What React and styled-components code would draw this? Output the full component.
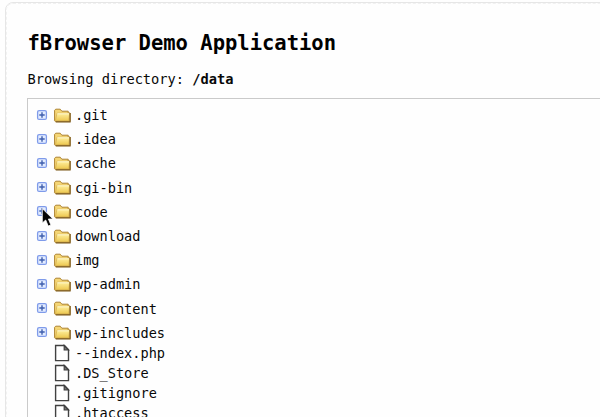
import React from "react";
import styled, { createGlobalStyle } from "styled-components";

const GlobalStyle = createGlobalStyle`
  html, body { margin: 0; height: 417px; overflow: hidden; background: #fefefe; }
  *, *::before, *::after { box-sizing: border-box; }
`;

const Page = styled.div`
  height: 417px;
  overflow: hidden;
  padding: 2px 0 0 5px;
  font-family: "DejaVu Sans Mono", monospace;
  font-size: 13.7px;
  color: #080808;
`;

const Card = styled.main`
  width: 640px;
  height: 460px;
  padding: 27px 0 0 21px;
  border: 1px solid #e6e6e6;
  border-radius: 8px;
  background: #fefefe;
  outline: 1px dashed #f1f1f1;
  outline-offset: -2px;
`;

const Title = styled.h1`
  margin: 0;
  height: 26px;
  padding-left: 0.5px;
  font-size: 20.5px;
  line-height: 26px;
  color: #000;
  white-space: pre;
`;

const Location = styled.p`
  margin: 13px 0 9px;
  height: 20px;
  padding-left: 0.5px;
  line-height: 20px;
  white-space: pre;
`;

const Tree = styled.ul`
  list-style: none;
  margin: 0;
  height: 400px;
  padding: 4px 0 0 9px;
  border: 1px solid #cacaca;
  font-size: 13.6px;
`;

const Row = styled.li`
  position: relative;
  display: grid;
  grid-template-columns: 17px 21px auto;
  align-items: center;
  height: ${(p) => (p.$file ? "20px" : "24.2px")};
  line-height: 20px;
  white-space: pre;
`;

const Files = styled.ul`
  list-style: none;
  margin: -2px 0 0;
  padding: 0;
`;

const Icon = styled.svg`
  display: block;
  overflow: visible;
`;

const ExpanderIcon = styled(Icon)`
  margin: 0 0 1px -0.5px;
`;

const Pointer = styled.svg`
  position: absolute;
  left: 5px;
  top: 8px;
  z-index: 1;
  overflow: visible;
`;

const Expander = () => (
  <ExpanderIcon width="10" height="10" viewBox="0 0 10 10">
    <rect x="0.6" y="0.6" width="8.8" height="8.8" rx="1.5" fill="#e3ecff" stroke="#7f9bea" strokeWidth="1.3" />
    <path d="M2.3 5H7.7M5 2.3V7.7" stroke="#3f5fae" strokeWidth="1.4" />
  </ExpanderIcon>
);

const Folder = () => (
  <Icon width="17" height="15" viewBox="0 0 17 15">
    <defs>
      <linearGradient id="folderFace" x1="0" y1="0" x2="0" y2="1">
        <stop offset="0" stopColor="#fff0a0" />
        <stop offset="1" stopColor="#edc850" />
      </linearGradient>
    </defs>
    <path d="M0.6 12.8V2.3L1.7 1.2H6.2L7.8 3.2H14.2V5H16.1V13.6H1.4Z" fill="#f5d675" stroke="#ad8330" strokeWidth="1" strokeLinejoin="round" />
    <path d="M3 5.2H15.6L14.8 12.8H1.4Z" fill="url(#folderFace)" stroke="#c59a3c" strokeWidth="0.5" />
    <path d="M3.3 5.8H15" stroke="#fffad0" />
    <path d="M16.1 5V13.9H1.8" fill="none" stroke="#806026" strokeWidth="1.2" />
  </Icon>
);

const FileIcon = () => (
  <Icon width="16" height="18" viewBox="0 0 16 18">
    <path d="M1.6 1.5H10.4L14.5 5.8V16.6H1.6Z" fill="#fff" stroke="#414141" strokeWidth="1.4" />
    <path d="M10.2 1.5V6H14.5Z" fill="#777" stroke="#414141" strokeWidth="1.2" />
  </Icon>
);

const Cursor = () => (
  <Pointer width="12" height="19" viewBox="0 0 12 19">
    <path d="M0.3 0.6V15L3.7 12L6.2 18.1L8.9 16.9L6.4 11H10.9Z" fill="#050505" stroke="#fff" strokeWidth="0.8" />
  </Pointer>
);

const folders = [".git", ".idea", "cache", "cgi-bin", "code", "download", "img", "wp-admin", "wp-content", "wp-includes"];
const files = ["--index.php", ".DS_Store", ".gitignore", ".htaccess"];

export default function App() {
  return (
    <Page>
      <GlobalStyle />
      <Card>
        <Title>fBrowser Demo Application</Title>
        <Location>Browsing directory: <b>/data</b></Location>
        <Tree>
          {folders.map((name) => (
            <Row key={name}>
              <Expander />
              <Folder />
              <span>{name}</span>
              {name === "code" && <Cursor />}
            </Row>
          ))}
          <li>
            <Files>
              {files.map((name) => (
                <Row key={name} $file>
                  <span />
                  <FileIcon />
                  <span>{name}</span>
                </Row>
              ))}
            </Files>
          </li>
        </Tree>
      </Card>
    </Page>
  );
}
